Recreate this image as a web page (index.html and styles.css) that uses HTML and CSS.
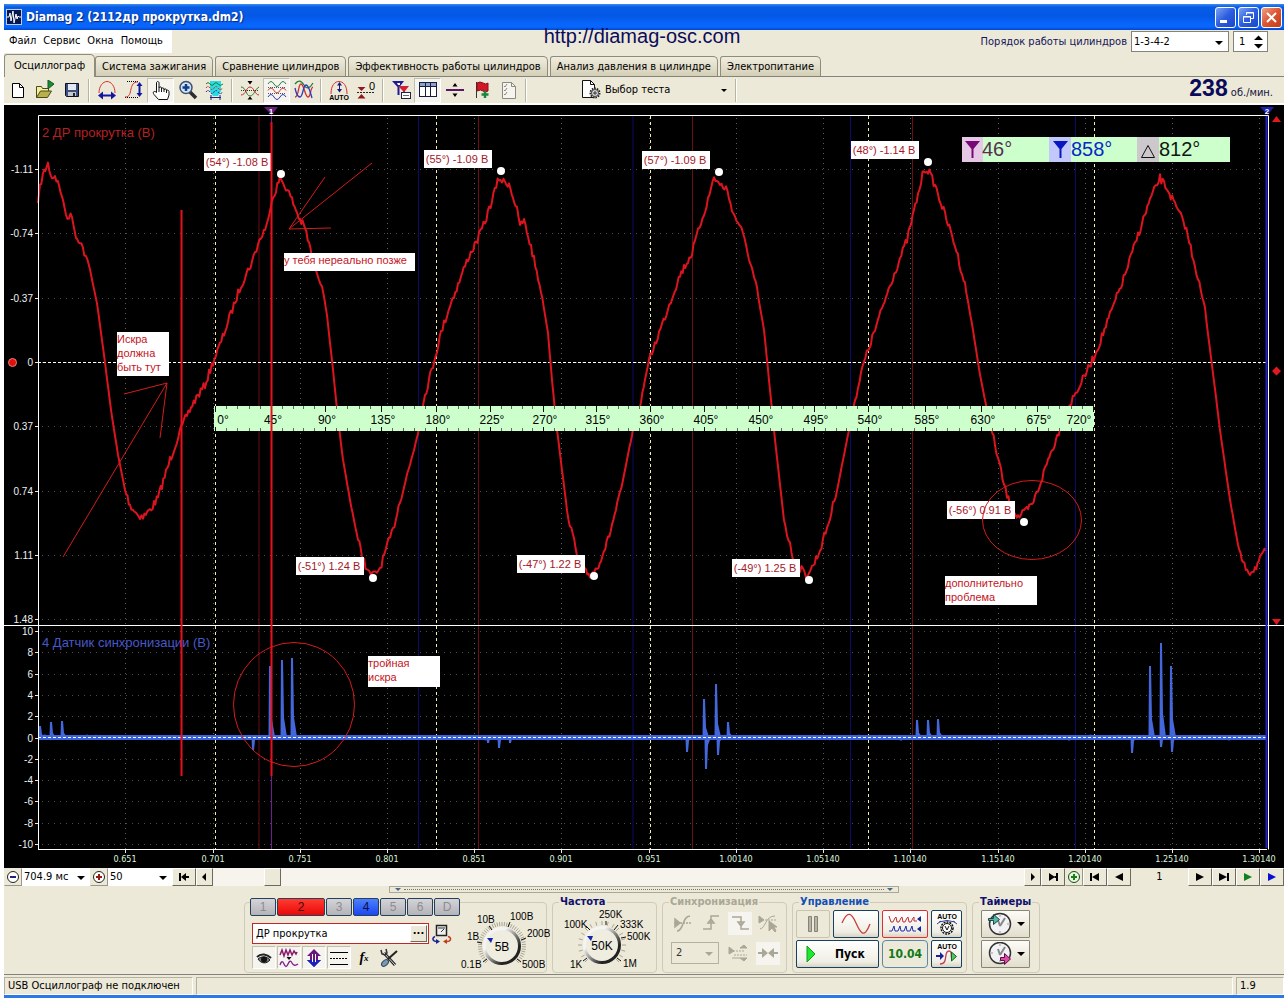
FILE: index.html
```html
<!DOCTYPE html>
<html lang="ru">
<head>
<meta charset="utf-8">
<title>Diamag 2 (2112др прокрутка.dm2)</title>
<link rel="stylesheet" href="styles.css">
</head>
<body>
<div class="window">
  <header class="titlebar">
    <svg class="app-icon" width="16" height="16" viewBox="0 0 16 16"><rect x=".5" y=".5" width="15" height="15" fill="#06184e" stroke="#b8ccf4"/><path d="M1 8h2l1-4 1 8 2-10 1 12 2-9 1 5 1-3 1 1h2" fill="none" stroke="#fff"/></svg>
    <h1 class="title">Diamag 2 (2112др прокрутка.dm2)</h1>
    <div class="caption-buttons">
      <button class="cap" aria-label="Свернуть"><svg width="19" height="19" viewBox="0 0 19 19"><path d="M4 13.500h7" stroke="#fff" stroke-width="3"/></svg></button>
      <button class="cap" aria-label="Восстановить"><svg width="19" height="19" viewBox="0 0 19 19" fill="none" stroke="#fff"><path d="M7.500 7V4.500h7v6H12M7 5h8M4.500 8.500h7v6h-7zM4 9h8"/></svg></button>
      <button class="cap close" aria-label="Закрыть"><svg width="19" height="19" viewBox="0 0 19 19"><path d="M5 5l9 9M14 5l-9 9" stroke="#fff" stroke-width="2"/></svg></button>
    </div>
    <a class="site" href="#">http://diamag-osc.com</a>
  </header>

  <div class="menurow">
    <nav class="menu"><button>Файл</button><button>Сервис</button><button>Окна</button><button>Помощь</button></nav>
    <div class="order">
      <label for="order">Порядок работы цилиндров</label>
      <span class="combo framed order-combo"><select id="order"><option>1-3-4-2</option></select></span>
      <span class="spin framed"><input id="cyl" value="1" aria-label="Цилиндр"><svg width="9" height="14" viewBox="0 0 9 14"><path d="M0 5l4.500-4.500L9 5zM0 9l4.500 4.500L9 9z"/></svg></span>
    </div>
  </div>

  <div class="tabs" role="tablist">
    <button class="tab active" role="tab">Осциллограф</button><button class="tab" role="tab">Система зажигания</button><button class="tab" role="tab">Сравнение цилиндров</button><button class="tab" role="tab">Эффективность работы цилиндров</button><button class="tab" role="tab">Анализ давления в цилиндре</button><button class="tab" role="tab">Электропитание</button>
  </div>

  <div class="toolbar">
    <button class="tool" aria-label="Новый"><svg width="20" height="20" viewBox="0 0 20 20"><path d="M4.500 3.500h7l4 4v10h-11z" fill="#fff" stroke="#000"/><path d="M11.500 3.500v4h4" fill="none" stroke="#000"/></svg></button>
    <button class="tool" aria-label="Открыть"><svg width="20" height="20" viewBox="0 0 20 20"><path d="M1.500 17.500v-11h5l1 2h6v3" fill="#f4f0a0" stroke="#4c4a18"/><path d="M1.500 17.500l4-6.500h11l-4 6.500z" fill="#b8b04c" stroke="#4c4a18"/><path d="M13 0v9l6-5z" fill="#1c8a38" stroke="#0b5a1e"/></svg></button>
    <button class="tool" aria-label="Сохранить"><svg width="20" height="20" viewBox="0 0 20 20"><path d="M3.500 3.500h13v13h-12l-1-1z" fill="#40507c" stroke="#0c1020"/><path d="M6 4h8v6H6z" fill="#e4e8f4"/><path d="M6 12h8v4H6z" fill="#c4c8d0"/><path d="M11 13h2v3h-2z" fill="#223"/></svg></button>
    <span class="sep"></span>
    <button class="tool" aria-label="Период"><svg width="20" height="20" viewBox="0 0 20 20" fill="none"><path d="M2 13C2 6 6 1.500 10 1.500S18 6 18 13" stroke="#d83030"/><path d="M3 15.500h14" stroke="#1018a0" stroke-width="2"/><path d="M1 15.500l5-4v8zM19 15.500l-5-4v8z" fill="#1018a0"/></svg></button>
    <button class="tool" aria-label="Амплитуда"><svg width="20" height="20" viewBox="0 0 20 20" fill="none"><path d="M3 1.500h12M1 17.500h14" stroke="#000" stroke-dasharray="1 1"/><path d="M1 17c5 0 5-4 6-8s2-7 7-7" stroke="#d83030"/><path d="M15.500 4v11" stroke="#1018a0" stroke-width="2"/><path d="M15.500 2l-3 4h6zM15.500 17l-3-4h6z" fill="#1018a0"/></svg></button>
    <button class="tool pressed" aria-label="Рука"><svg width="20" height="20" viewBox="0 0 20 20"><path d="M5.500 12.500V3c0-2 2.500-2 2.500 0v5c0-1.500 2.500-1.500 2.500 0v1c0-1.500 2.500-1.500 2.500 0v1c0-1.500 2.500-1.500 2.500 0v1c0-1.500 2.500-1 2.500.500V15l-1.500 4.500h-9L3 14.500c-2-3 .500-4 2.500-2z" fill="#fff" stroke="#111"/><path d="M8 8v4M10.500 9v3M13 10v2M15.500 11v2" stroke="#111"/></svg></button>
    <button class="tool" aria-label="Масштаб"><svg width="20" height="20" viewBox="0 0 20 20"><path d="M12 12l6 6" stroke="#2c2c34" stroke-width="3.500"/><circle cx="8" cy="7.500" r="6" fill="#cfe6fa" stroke="#405070" stroke-width="1.500"/><path d="M8 4v7M4.500 7.500h7" stroke="#103c88" stroke-width="2.500"/></svg></button>
    <button class="tool" aria-label="Фрагмент"><svg width="20" height="20" viewBox="0 0 20 20" fill="none"><path d="M5 1h11v10l-3 5H8l-3-5z" fill="#28dce0"/><path d="M1 4q2-3 4 0t4 0 4 0 5 0" stroke="#187840"/><path d="M1 8q2-3 4 0t4 0 4 0 5 0" stroke="#c03030" stroke-dasharray="2 1"/><path d="M1 12q2-3 4 0t4 0 4 0 5 0" stroke="#2828a0" stroke-dasharray="2 1"/><path d="M5 17.500h11M6 15v5M15 15v5" stroke="#182880"/></svg></button>
    <span class="sep"></span>
    <button class="tool" aria-label="Совместить"><svg width="20" height="20" viewBox="0 0 20 20" fill="none"><path d="M1 7c5 0 5 9 9 9s5-7 9-9" stroke="#2a7a30"/><path d="M1 15c5 0 5-8 9-8s5 8 9 8" stroke="#c03030"/><path d="M1 10.500h18" stroke="#333" stroke-dasharray="1 1"/><path d="M10 4.500L7.500 1h5zM10 16.500l-2.500 3h5z" fill="#000"/></svg></button>
    <button class="tool pressed" aria-label="Разнести"><svg width="20" height="20" viewBox="0 0 20 20" fill="none"><path d="M1 4q3-5 6 0t6 0 6 0" stroke="#20803c"/><path d="M1 10.500q3-5 6 0t6 0 6 0" stroke="#c83030"/><path d="M1 17q3-5 6 0t6 0 6 0" stroke="#3438b0"/><path d="M1 7.500h18M1 13.500h18" stroke="#555" stroke-dasharray="1 1"/></svg></button>
    <button class="tool" aria-label="Наложить"><svg width="20" height="20" viewBox="0 0 20 20" fill="none" stroke-width="1.300"><path d="M1 4c3-4 6-4 9 1s6 3 9-2" stroke="#20803c"/><path d="M1 17c4 0 3-13 6-13s4 13 7 13 2-9 5-10" stroke="#d03030"/><path d="M1 8c1 5 2 9 5 9s3-12 6-12 4 7 6 13" stroke="#3038c0"/></svg></button>
    <span class="sep"></span>
    <button class="tool" aria-label="Авто"><svg width="20" height="20" viewBox="0 0 20 20" fill="none"><path d="M2 14C2 5 6 1.500 10 1.500S18 5 18 14" stroke="#d83030"/><path d="M10.500 4v6" stroke="#181880"/><path d="M10.500 2L8 5.500h5zM10.500 12.500L8 9h5z" fill="#181880"/><text class="mini" x="10" y="20" text-anchor="middle">AUTO</text></svg></button>
    <button class="tool" aria-label="Ноль"><svg width="20" height="20" viewBox="0 0 20 20"><path d="M1.500 7h8L5.500 11zM1.500 18.500h8L5.500 14z" fill="#901818"/><path d="M1 12.500h18" stroke="#222" stroke-dasharray="2 1"/><text class="zero" x="13" y="10">0</text></svg></button>
    <span class="sep"></span>
    <button class="tool" aria-label="Маркеры"><svg width="20" height="20" viewBox="0 0 20 20"><path d="M1 1h12L8.500 7v8h-2V7z" fill="#1c1c98"/><path d="M7 6h11l-4 5v3h-2v-3z" fill="#d02038"/><path d="M6 3h3v2H7z" fill="#fff"/><rect x="10.500" y="12.500" width="9" height="6" fill="#fff" stroke="#224"/><path d="M12 15.500h6" stroke="#667"/></svg></button>
    <button class="tool pressed" aria-label="Таблица"><svg width="20" height="20" viewBox="0 0 20 20"><rect x="1.500" y="2.500" width="17" height="14" fill="#fff" stroke="#181c40"/><path d="M2 3h16v3H2z" fill="#8ca0c8"/><path d="M7.500 3v13M12.500 3v13M2 6.500h16" stroke="#181c40"/></svg></button>
    <button class="tool" aria-label="Линейка"><svg width="20" height="20" viewBox="0 0 20 20"><path d="M1 10h18" stroke="#5c1464" stroke-width="2"/><path d="M10 3L7.500 6.500h5zM10 17l-2.500-3.500h5z" fill="#000"/></svg></button>
    <button class="tool" aria-label="Добавить метку"><svg width="20" height="20" viewBox="0 0 20 20"><path d="M4.500 2v16" stroke="#333"/><path d="M5 3q3-2 6 0t5 0v8q-3 2-5 0t-6 0z" fill="#d01828" stroke="#881018"/><path d="M13 11v7M9.500 14.500h7" stroke="#18883c" stroke-width="2.500"/></svg></button>
    <button class="tool" aria-label="Список"><svg width="20" height="20" viewBox="0 0 20 20" fill="none" stroke="#8a8a84"><path d="M3.500 2.500h9l4 4v12h-13z" fill="#f6f4ec"/><path d="M12.500 2.500v4h4M5 6l1 1 2-3M5 10l1 1 2-3M5 14l1 1 2-3"/></svg></button>
    <span class="sep"></span>
    <button class="test"><svg width="20" height="20" viewBox="0 0 20 20"><path d="M1.500.500h8l4 4v13h-12z" fill="#fff" stroke="#111"/><path d="M9.500.500v4h4" fill="none" stroke="#111"/><circle cx="14" cy="13" r="4.500" fill="#ddd" stroke="#222" stroke-width="2" stroke-dasharray="1.500 1"/><circle cx="14" cy="13" r="3.500" fill="#ddd" stroke="#444"/><path d="M14 11v4M12 13h4" stroke="#333"/></svg><span>Выбор теста</span><i class="caret"></i></button>
    <span class="sep"></span>
    <p class="rpm"><b>238</b> об./мин.</p>
  </div>

  <svg class="scope" id="scope" viewBox="4 105 1280 763" role="img" aria-label="Осциллограмма">
    <rect x="4" y="105" width="1280" height="763"/>
    <g id="grid"></g>
    <g class="sync"><path d="M215.500 116v733M436.500 116v733M650.500 116v733M868.500 116v733M1094.500 116v733"/></g>
    <path class="tdc-red" d="M259 116v733M478.500 116v733M692.500 116v733M912.500 116v733"/>
    <path class="tdc-blue" d="M418.500 116v733M633 116v733M850.500 116v733M1075.500 116v733"/>
    <path class="cursor1" d="M271.500 107v742"/>
    <path class="zero-line" d="M38 362.500h1229"/>
    <g id="traces"></g>
    <path class="zero-line" d="M38 737.500h1229"/>
    <path class="frame" d="M38.500 849V115.500H1268.500V849.500M38 849.500h1229M4 625.500h1280"/>
    <path class="cursor2" d="M1266.500 116v732"/>
    <path d="M264 107h14l-6.500 8z" fill="#68207c"/><path d="M1260 107h14l-6.500 8z" fill="#1820b0"/>
    <text class="flag" x="271" y="114">1</text><text class="flag" x="1267" y="114">2</text>
    <path class="level" d="M1272 122l4.500-6 4.500 6zM1272 371l4.500-4.500 4.500 4.500-4.500 4.500zM1272 619h9l-4.500 6z"/>
    <circle cx="12.500" cy="362.500" r="4" fill="#e01010" stroke="#f08070"/>
    <text class="chan red" x="42" y="137">2 ДР прокрутка (В)</text>
    <text class="chan blue" x="42" y="647">4 Датчик синхронизации (В)</text>
    <g id="ruler"></g>
    <g id="peaks"></g>
    <g>
      <rect x="962" y="137" width="268" height="25" fill="#ccffcc"/><rect x="962" y="137" width="21" height="25" fill="#e6c8e6"/><rect x="1049" y="137" width="22" height="25" fill="#c2c8fa"/><rect x="1137" y="137" width="22" height="25" fill="#ccc8cc"/>
      <path d="M965 141h15l-6.500 8v9h-2v-9z" fill="#780878"/><path d="M1053 141h15l-6.500 8v9h-2v-9z" fill="#0818c0"/><path d="M1141.500 157.500l6.500-12 6.500 12z" fill="none" stroke="#111"/>
      <text class="deg" x="982" y="156" fill="#58304e">46°</text><text class="deg" x="1071" y="156" fill="#0828c8">858°</text><text class="deg" x="1159" y="156" fill="#101810">812°</text>
    </g>
    <g fill="#fff"><rect x="284" y="253" width="131" height="18"/><rect x="117" y="332" width="52" height="44"/><rect x="945" y="576" width="92" height="29"/><rect x="368" y="656" width="72" height="31"/></g>
    <g class="note"><text x="284" y="264">у тебя нереально позже</text><text x="117" y="343">Искра</text><text x="117" y="357">должна</text><text x="117" y="371">быть тут</text><text x="945" y="587">дополнительно</text><text x="945" y="601">проблема</text><text x="368" y="667">тройная</text><text x="368" y="681">искра</text></g>
    <g class="pen"><path d="M372 163L289 229l36-52M289 229l42-1M63 557L167 383l-43 11M167 383l-7 55"/><ellipse cx="294" cy="704.500" rx="60.500" ry="62"/><ellipse cx="1032" cy="520" rx="49.500" ry="39.500"/></g>
    <path class="hand-line" d="M181.500 210v566M271.500 122v654"/>
  </svg>

  <div class="navrow">
    <button class="step" aria-label="Уменьшить"><svg width="14" height="14" viewBox="0 0 14 14"><circle cx="7" cy="7" r="5.500" fill="#fff" stroke="#222"/><path d="M4 7h6" stroke="#1c2080" stroke-width="2"/></svg></button>
    <span class="combo time-combo"><select aria-label="Развёртка"><option>704.9 мс</option></select></span>
    <button class="step" aria-label="Увеличить"><svg width="14" height="14" viewBox="0 0 14 14"><circle cx="7" cy="7" r="5.500" fill="#fff" stroke="#222"/><path d="M4 7h6M7 4v6" stroke="#901818" stroke-width="2"/></svg></button>
    <span class="combo zoom-combo"><select aria-label="Шаг"><option>50</option></select></span>
    <button class="nav wide" aria-label="В начало"><svg width="12" height="8" viewBox="0 0 12 8"><path d="M1 0h2v8H1zM3 4l5-4v8zM8 3h3v2H8z"/></svg></button>
    <button class="nav narrow" aria-label="Влево"><svg width="5" height="8" viewBox="0 0 5 8"><path d="M0 4l4-4v8z"/></svg></button>
    <div class="track"><button class="thumb" aria-label="Прокрутка"></button></div>
    <button class="nav narrow" aria-label="Вправо"><svg width="5" height="8" viewBox="0 0 5 8"><path d="M5 4L1 0v8z"/></svg></button>
    <button class="nav wide" aria-label="В конец"><svg width="12" height="8" viewBox="0 0 12 8"><path d="M11 0H9v8h2zM8 4L2 0v8zM7 3h2v2H7z"/></svg></button>
    <button class="step" aria-label="Добавить кадр"><svg width="14" height="14" viewBox="0 0 14 14"><circle cx="7" cy="7" r="5.500" fill="#e8f8e0" stroke="#184818"/><path d="M4 7h6M7 4v6" stroke="#188018" stroke-width="2"/></svg></button>
    <button class="nav wide" aria-label="Первый кадр"><svg width="12" height="8" viewBox="0 0 12 8"><path d="M1 0h2v8H1zM3 4l7-4v8z"/></svg></button>
    <button class="nav wide" aria-label="Предыдущий кадр"><svg width="8" height="8" viewBox="0 0 8 8"><path d="M0 4l8-4v8z"/></svg></button>
    <output class="frame-no">1</output>
    <button class="nav wide" aria-label="Следующий кадр"><svg width="8" height="8" viewBox="0 0 8 8"><path d="M8 4L0 0v8z"/></svg></button>
    <button class="nav wide" aria-label="Последний кадр"><svg width="12" height="8" viewBox="0 0 12 8"><path d="M11 0H9v8h2zM9 4L1 0v8z"/></svg></button>
    <button class="nav wide" aria-label="Воспроизвести"><svg width="8" height="8" viewBox="0 0 8 8"><path d="M8 4L0 0v8z" fill="#108020"/></svg></button>
    <button class="nav wide" aria-label="Воспроизвести все"><svg width="8" height="8" viewBox="0 0 8 8"><path d="M8 4L0 0v8z" fill="#0810d8"/></svg></button>
  </div>

  <div class="splitter"><i></i><span></span><i></i></div>

  <section class="dock">
    <fieldset class="group channel" aria-label="Канал">
      <div class="chan-left">
        <div class="chan-row"><button class="ch">1</button><button class="ch ch-red">2</button><button class="ch">3</button><button class="ch ch-blue">4</button><button class="ch">5</button><button class="ch">6</button><button class="ch">D</button></div>
        <div class="name-row">
          <span class="name-box"><input value="ДР прокрутка" aria-label="Название канала"><button class="dots" aria-label="Выбрать">···</button></span>
          <button class="plain" aria-label="Заменить датчик"><svg width="20" height="20" viewBox="0 0 20 20" fill="none"><rect x="4.500" y="1.500" width="10" height="10" fill="#eee" stroke="#222" stroke-width="1.500"/><path d="M6 4h7M9 8l3-3" stroke="#333"/><path d="M5 17.500c-5 0-5-4-2-5" stroke="#1c2490" stroke-width="1.500"/><path d="M4 15v5l4-2.500z" fill="#1c2490"/><path d="M16 12.500c4 1 3 5-1 5" stroke="#c04020" stroke-width="1.500"/><path d="M15 15v5l-4-2.500z" fill="#c04020"/></svg></button>
        </div>
        <div class="icon-row">
          <button class="mini-tool pressed" aria-label="Видимость"><svg width="20" height="20" viewBox="0 0 20 20"><path d="M3 9c4-4 10-3 14 1" fill="none" stroke="#222" stroke-width="2"/><path d="M4 11c3-3 9-3 12 1-3 4-9 4-12-1z" fill="#777" stroke="#222"/><circle cx="10" cy="11.500" r="3" fill="#111"/></svg></button>
          <button class="mini-tool pressed" aria-label="Фильтр"><svg width="20" height="20" viewBox="0 0 20 20" fill="none"><path d="M1 7l2-5 2 6 2-6 2 5 2-5 2 5 2-4 2 3 1-2" stroke="#8c1870" stroke-width="1.500"/><path d="M1 17q2-6 4-1t4 0 4-1 6 1" stroke="#7c1c90" stroke-width="1.300"/><path d="M7.500 9h5L10 12z" fill="#111"/></svg></button>
          <button class="mini-tool pressed" aria-label="Инверсия"><svg width="20" height="20" viewBox="0 0 20 20"><path d="M10 1L3 8h3v4H3l7 7 7-7h-3V8h3z" fill="#68187c"/><path d="M3 12l7 7 7-7z" fill="#1820c0"/><path d="M8.500 6v8M11.500 6v8" stroke="#fff"/></svg></button>
          <button class="mini-tool pressed" aria-label="Линии"><svg width="20" height="20" viewBox="0 0 20 20"><path d="M1 4.500h18M1 16.500h18" stroke="#000"/><path d="M1 10.500h18" stroke="#000" stroke-dasharray="2 1"/></svg></button>
          <button class="mini-tool fx" aria-label="Функция">f<sub>x</sub></button>
          <button class="mini-tool" aria-label="Настройка"><svg width="20" height="20" viewBox="0 0 20 20"><path d="M5 5l11 12" stroke="#222" stroke-width="3"/><path d="M5 5l11 12" stroke="#ddd"/><path d="M2 2l1 4 3 1 2-2-1-4" fill="none" stroke="#333" stroke-width="1.500"/><path d="M18 3L9 11" stroke="#222" stroke-width="2"/><ellipse cx="6" cy="15" rx="4" ry="2.500" transform="rotate(-42 6 15)" fill="#7898b8" stroke="#345"/></svg></button>
        </div>
      </div>
      <svg class="knob" width="90" height="64" viewBox="456 908 90 64"><g id="knobV"></g></svg>
    </fieldset>
    <fieldset class="group freq"><legend>Частота</legend><svg class="knob" width="94" height="64" viewBox="561 908 94 64"><g id="knobF"></g></svg></fieldset>
    <fieldset class="group trig" disabled><legend>Синхронизация</legend>
      <div class="trig-row">
        <button class="ticon" aria-label="Уровень"><svg width="20" height="20" viewBox="0 0 20 20" fill="none" stroke="#aaa796" stroke-width="1.500"><path d="M4 18c7 0 5-15 13-15"/><path d="M1 10h18" stroke-dasharray="2 1"/><path d="M2 6v8l5-4z" fill="#aaa796"/></svg></button>
        <button class="ticon" aria-label="Фронт"><svg width="20" height="20" viewBox="0 0 20 20" fill="none" stroke="#aaa796" stroke-width="1.500"><path d="M2 16h8V3h8M7 10l3-4 3 4z"/></svg></button>
        <button class="ticon pressed" aria-label="Спад"><svg width="20" height="20" viewBox="0 0 20 20" fill="none" stroke="#aaa796" stroke-width="1.500"><path d="M2 4h9v12h8M8 9l3 4 3-4z"/></svg></button>
        <button class="ticon" aria-label="Выбор уровня"><svg width="20" height="20" viewBox="0 0 20 20" fill="none" stroke="#aaa796"><path d="M2 16c6-1 5-13 15-13"/><path d="M1 7h18" stroke-dasharray="2 1"/><path d="M1 3v7l5-3zM11 8v10l3-3 3 4 1-1-2-4h3z" fill="#aaa796"/></svg></button>
      </div>
      <div class="trig-row">
        <span class="combo trig-combo"><select aria-label="Канал синхронизации" disabled><option>2</option></select></span>
        <button class="ticon" aria-label="Порог"><svg width="20" height="20" viewBox="0 0 20 20" fill="none" stroke="#aaa796"><path d="M2 8h14M6 12h13" stroke-dasharray="2 1"/><path d="M1 4v7l5-3zM12 5h7l-3-3zM12 15h7l-3 3z" fill="#aaa796"/><path d="M4 15h8"/></svg></button>
        <button class="ticon pressed" aria-label="Центр"><svg width="20" height="20" viewBox="0 0 20 20"><path d="M0 9h4V5l6 5-6 5v-4H0zM20 9h-4V5l-6 5 6 5v-4h4z" fill="#aaa796"/></svg></button>
      </div>
    </fieldset>
    <fieldset class="group control"><legend>Управление</legend>
      <div class="control-grid">
        <button class="xp flat" aria-label="Пауза"><svg width="14" height="16" viewBox="0 0 14 16" fill="#b8b5a8" stroke="#858378"><path d="M2.500.500h3v15h-3zM8.500.500h3v15h-3z"/></svg></button>
        <button class="xp" aria-label="Генератор"><svg width="32" height="22" viewBox="0 0 32 22"><path d="M2 10C8-4 12 1 16 10s8 17 14 1" fill="none" stroke="#c84038" stroke-width="1.300"/></svg></button>
        <button class="xp redframe" aria-label="Запись"><svg width="34" height="20" viewBox="0 0 34 20" fill="none"><path d="M1 2l2 6h2l2-4 1-1 1 5h2l2-4 1-1 1 5h2l2-4 1-1 1 5h2l2-4 1-1v4h3" stroke="#c42c3c"/><path d="M1 17h3l2-5 1 5h3l2-5 1 5h3l2-5 1 5h3l2-5 1 5h3" stroke="#2430b0"/><path d="M33 2v6l-4-3zM33 12v6l-4-3z" fill="#1c2490"/></svg></button>
        <button class="xp" aria-label="Авто вольт"><svg width="26" height="24" viewBox="0 0 26 24" fill="none" stroke="#111"><text class="mini" x="13" y="7" text-anchor="middle">AUTO</text><circle cx="13" cy="16" r="6" fill="#fff" stroke-width="1.500" stroke-dasharray="2 1"/><circle cx="13" cy="16" r="4.500" fill="#fff"/><path d="M11 14l2 4 2-4"/><path d="M5 10q8-3 16 0M3 12l4-3M23 12l-4-3" stroke="#28409c"/></svg></button>
        <button class="xp start"><svg width="14" height="18" viewBox="0 0 14 18"><path d="M3 1v16l8-8z" fill="#20e830" stroke="#0ca018"/></svg>Пуск</button>
        <output class="xp clock">10.04</output>
        <button class="xp" aria-label="Авто пуск"><svg width="26" height="24" viewBox="0 0 26 24" fill="none"><text class="mini" x="13" y="7" text-anchor="middle">AUTO</text><path d="M6 22c9 0 3-13 9-13 4 0 1 7 3 8" stroke="#c04050" stroke-width="1.300"/><path d="M2 14h5" stroke="#1820a0" stroke-width="2"/><path d="M6 10v8l4-4z" fill="#1820a0"/><path d="M17.500 10v9l5-4.500z" fill="#50c860" stroke="#186028"/></svg></button>
      </div>
    </fieldset>
    <fieldset class="group timers"><legend>Таймеры</legend>
      <div class="timer-col">
        <button class="timer" aria-label="Таймер пуска"><svg width="26" height="24" viewBox="0 0 26 24"><circle cx="14" cy="12" r="10.500" fill="#f2f2f4" stroke="#333" stroke-width="1.500"/><path d="M14 14l-2-6M14 14l5-8" stroke="#888" stroke-width="2"/><path d="M14 3v2M14 19v2M21 12h2" stroke="#999"/><path d="M2.500 6.500h5v-4l6 5-6 5v-4h-5z" fill="#58b8a8" stroke="#184848"/></svg><i class="caret"></i></button>
        <button class="timer" aria-label="Таймер остановки"><svg width="26" height="24" viewBox="0 0 26 24"><circle cx="14" cy="11" r="10.500" fill="#f2f2f4" stroke="#333" stroke-width="1.500"/><path d="M14 13l-2-6M14 13l5-8" stroke="#888" stroke-width="2"/><path d="M14 2v2M14 18v2M5 11h2" stroke="#999"/><path d="M14.500 15.500h4v-4l6 5.500-6 5.500v-4h-4z" fill="#e048a8" stroke="#581040"/></svg><i class="caret"></i></button>
      </div>
    </fieldset>
  </section>

  <footer class="status"><span class="cell usb">USB Осциллограф не подключен</span><span class="cell grow"></span><span class="cell ver">1.9</span></footer>
</div>
<div class="desktop"></div>
<script src="script.js"></script>
</body>
</html>
```
FILE: styles.css
```css
* { box-sizing: border-box; }
body {
  margin: 0;
  min-height: 100vh;
  padding: 4px 4px 0 4px;
  display: flex;
  flex-direction: column;
  background: #fff;
  font: 11px/14px "DejaVu Sans Condensed", "DejaVu Sans", sans-serif;
  color: #000;
}
button, input, select { font: inherit; color: inherit; margin: 0; border: 0; background: none; padding: 0; border-radius: 0; }
svg { display: block; flex: none; }
.window { background: #ece9d8; display: flex; flex-direction: column; }
.desktop { flex: 1; min-height: 4px; background: #2c78e4; }

.titlebar {
  position: relative;
  height: 26px;
  display: flex;
  align-items: center;
  gap: 4px;
  padding: 0 2px;
  background: linear-gradient(#3a8cf4 0, #0a5ce4 3px, #0458e6 12px, #0866fc 20px, #0866fc 23px, #0246c8 26px);
}
.title { margin: 0; flex: 1; font: bold 12px/16px "DejaVu Sans Condensed", sans-serif; color: #fff; text-shadow: 1px 1px 1px #0c2a80; }
.caption-buttons { display: flex; gap: 2px; }
.cap { width: 21px; height: 21px; border: 1px solid #fff; border-radius: 3px; background: linear-gradient(135deg, #7ca4f4, #2c5ce0 50%, #1c48c8); }
.cap.close { background: linear-gradient(135deg, #f0a088, #dc5430 50%, #c03c18); }
.site { position: absolute; left: 0; right: 4px; top: 20px; text-align: center; font: 20px/24px "Liberation Sans", sans-serif; color: #0c0c5c; text-decoration: none; }

.menurow { height: 25px; display: flex; justify-content: space-between; align-items: flex-start; }
.menu { display: flex; gap: 7px; background: #fff; padding: 4px 9px 5px 5px; }
.menu button { height: 14px; }
.order { display: flex; align-items: center; gap: 4px; padding: 1px 16px 0 0; color: #14145c; }
.framed { border: 1px solid #84827a; background: #fff; height: 21px; color: #000; }
.combo { position: relative; display: inline-flex; }
.combo select { appearance: none; width: 100%; height: 100%; padding: 0 12px 0 2px; }
.combo::after, .caret { content: ""; border: 4px solid transparent; border-top-color: #000; border-bottom: 0; }
.combo::after { position: absolute; right: 5px; top: 50%; margin-top: -1px; pointer-events: none; }
.order-combo { width: 98px; }
.spin { display: flex; align-items: center; width: 35px; padding-left: 5px; }
.spin input { width: 15px; }

.tabs { display: flex; align-items: flex-end; height: 22px; gap: 2px; border-bottom: 1px solid #84827a; }
.tab { height: 20px; padding: 0 6px; border: 1px solid #8f8c7c; border-bottom: 0; border-radius: 3px 5px 0 0; background: linear-gradient(#f0eddf, #d4cfb6); white-space: nowrap; }
.tab.active { height: 23px; padding: 0 9px; background: #ece9d8; margin: 0 -2px -1px 0; }

.toolbar { height: 28px; display: flex; align-items: center; border-bottom: 2px solid #fff; }
.tool { width: 27px; height: 25px; display: flex; align-items: center; justify-content: center; }
.pressed { background: #f6f4ee; border: 1px solid #fff; border-top-color: #c4c0b0; border-left-color: #c4c0b0; }
.sep { width: 8px; height: 23px; background: linear-gradient(90deg, transparent 3px, #b8b4a2 3px, #b8b4a2 4px, #fff 4px, #fff 5px, transparent 5px); flex: none; }
.test { width: 202px; height: 24px; padding: 0 5px 0 51px; display: flex; align-items: center; gap: 4px; }
.test span { flex: 1; text-align: left; }
.caret { flex: none; width: 0; height: 0; display: inline-block; }
.test .caret { border-width: 3px 3px 0 3px; }
.rpm { margin: 0 11px 0 auto; line-height: 24px; color: #14143c; }
.rpm b { font: bold 23px/24px "Liberation Sans", sans-serif; color: #0a0a5a; }
.mini { font: bold 7px "Liberation Sans", sans-serif; fill: #000; stroke: none; }
.zero { font: 11px "Liberation Sans", sans-serif; }

.scope { width: 100%; height: auto; }
.grid-line { stroke: #4a4e4a; stroke-dasharray: 1 5; fill: none; }
.grid-v { stroke: #5a5e5a; stroke-dasharray: 1 4; fill: none; }
.axis { stroke: #e8e8e8; fill: none; }
.ylab, .xlab { fill: #f0f0f0; font: 10px "Liberation Sans", sans-serif; text-anchor: end; }
.xlab { font: 9px "DejaVu Sans Condensed", sans-serif; text-anchor: middle; fill: #dcf4dc; }
.sync path { stroke: #f4f0a0; stroke-dasharray: 3 3; }
.tdc-red { stroke: #681014; }
.tdc-blue { stroke: #0a0a68; }
.cursor1 { stroke: #70208c; }
.cursor2 { stroke: #2020d0; stroke-width: 2; }
.zero-line { stroke: #fff; stroke-dasharray: 3 2; }
.frame { fill: none; stroke: #fff; }
.flag { font: bold 8px "Liberation Sans", sans-serif; fill: #fff; text-anchor: middle; }
.level { fill: #e01820; }
.chan { font: 13px "Liberation Sans", sans-serif; }
.chan.red { fill: #b42024; }
.chan.blue { fill: #4858c8; }
.trace-red { fill: none; stroke: #dc1420; stroke-width: 2; stroke-linejoin: round; }
.peak { font: 11px "Liberation Sans", sans-serif; fill: #a41828; text-anchor: middle; }
.deg { font: 20px "Liberation Sans", sans-serif; }
.rlab { font: 12px "Liberation Sans", sans-serif; text-anchor: middle; }
.note { font: 11px "Liberation Sans", sans-serif; fill: #c41424; }
.pen { fill: none; stroke: #d41c1c; }
.hand-line { stroke: #e8101c; stroke-width: 2; fill: none; }

.navrow { height: 18px; display: flex; align-items: stretch; }
.step { width: 18px; display: flex; align-items: center; justify-content: center; border: 1px solid #ece9d8; border-right-color: #9a9788; border-bottom-color: #9a9788; }
.navrow .combo { background: #fff; }
.time-combo { width: 68px; }
.zoom-combo { width: 64px; }
.nav { display: flex; align-items: center; justify-content: center; border: 1px solid #fff; border-right-color: #6c6a5e; border-bottom-color: #6c6a5e; }
.nav.wide { width: 24px; }
.nav.narrow { width: 17px; }
.track { flex: 1; display: flex; background: #f6f4ec; padding-left: 51px; }
.thumb { width: 17px; background: #ece9d8; border: 1px solid #fff; border-right-color: #6c6a5e; border-bottom-color: #6c6a5e; }
.frame-no { width: 57px; text-align: center; line-height: 18px; }

.splitter { align-self: center; width: 510px; max-width: 100%; height: 7px; display: flex; align-items: center; gap: 3px; padding: 0 5px; border: 1px solid #aaa796; }
.splitter i { border: 3px solid transparent; border-top-color: #48688c; border-bottom: 0; }
.splitter span { flex: 1; border-top: 1px dotted #77756a; }

.dock { display: flex; justify-content: center; gap: 5px; padding: 2px 4px 1px 0; border-bottom: 1px solid #84827a; }
.group { margin: 0; min-width: 0; height: 78px; padding: 0; border: 1px solid #cfcbb8; border-radius: 4px; }
.group legend { margin-left: 6px; padding: 0 1px; font: bold 11px/14px "DejaVu Sans Condensed", sans-serif; color: #10106c; }
.channel { display: flex; justify-content: space-between; width: 303px; height: 71px; margin-top: 7px; padding: 0 2px 0 5px; }
.chan-left { display: flex; flex-direction: column; margin-top: -5px; }
.chan-row { display: flex; gap: 1px; }
.ch { width: 26px; height: 18px; border: 1px solid #24405c; border-radius: 2px; background: linear-gradient(#d4d4d8, #b4b4b8); color: #8c8c90; font: 12px/14px "Liberation Sans", sans-serif; }
.ch-red { width: 48px; background: linear-gradient(#ff3c30, #e80808); color: #3c0808; }
.ch-blue { background: linear-gradient(#4c80fc, #1c48f0); color: #08104c; }
.name-row { display: flex; align-items: center; gap: 3px; margin: 7px 0 0 2px; }
.name-box { display: flex; width: 177px; height: 21px; padding: 1px; border: 1px solid #c02828; background: #fff; }
.name-box input { flex: 1; min-width: 0; padding-left: 2px; }
.dots { width: 17px; background: #ece9d8; border: 1px solid #fff; border-right-color: #6c6a5e; border-bottom-color: #6c6a5e; font-weight: bold; line-height: 10px; }
.icon-row { display: flex; gap: 1px; margin: 2px 0 0 2px; }
.mini-tool { width: 24px; height: 23px; display: flex; align-items: center; justify-content: center; }
.fx { font: italic bold 14px/16px "Liberation Serif", serif; }
.fx sub { font-size: 9px; }
.knob text { font: 10px "Liberation Sans", sans-serif; }
.knob .val { font-size: 12px; text-anchor: middle; }
.knob { margin-top: 5px; }
.freq { width: 105px; }
.freq .knob { margin: -1px 0 0 8px; }
.group.trig { width: 125px; }
.group.trig legend { color: #aaa796; }
.trig-row { display: flex; align-items: center; justify-content: space-between; height: 28px; padding: 0 6px 0 8px; }
.trig-row + .trig-row { margin-top: 2px; }
.ticon { width: 24px; height: 23px; display: flex; align-items: center; justify-content: center; }
.ticon.pressed { border: 0; }
.trig-combo { width: 48px; height: 22px; border: 1px solid #b4b1a0; }
.trig-combo select { color: #333; opacity: 1; padding-left: 4px; }
.trig-combo::after { border-top-color: #aaa796; }
.group.control { width: 175px; }
.group.control legend { color: #1450b4; }
.control-grid { display: grid; grid-template-columns: 34px 46px 46px 31px; gap: 2px 3px; padding: 1px 0 0 3px; }
.xp { height: 28px; display: flex; align-items: center; justify-content: center; border: 1px solid #184064; border-radius: 2px; background: linear-gradient(#fff, #f0eee4 80%, #d8d4c4); }
.flat { border-color: #c8c4b0; background: #ece9d8; }
.redframe { border-color: #d83038; }
.start { grid-column: span 2; gap: 17px; justify-content: flex-start; padding-left: 7px; font-weight: bold; font-size: 12px; }
.clock { border: 1px solid #5c88a8; border-radius: 4px; background: #ece9d8; color: #107818; font-weight: bold; font-size: 12px; }
.timers { width: 68px; }
.timer-col { display: flex; flex-direction: column; gap: 2px; width: 49px; margin: 1px 0 0 8px; }
.timer { height: 28px; display: flex; align-items: center; justify-content: center; gap: 5px; border: 1px solid #88867a; border-radius: 1px; background: linear-gradient(#fcfbf6, #e2decc); }

.status { display: flex; height: 20px; gap: 3px; padding-top: 2px; }
.cell { border: 1px solid #fff; border-top-color: #b4b1a0; border-left-color: #b4b1a0; padding: 1px 3px; white-space: nowrap; }
.usb { width: 189px; }
.grow { flex: 1; }
.ver { width: 48px; }
```
FILE: script.js
```js
const NS = 'http://www.w3.org/2000/svg';
function add(parent, tag, attrs, text) {
  const el = document.createElementNS(NS, tag);
  for (const k in attrs) el.setAttribute(k, attrs[k]);
  if (text !== undefined) el.textContent = text;
  parent.appendChild(el);
  return el;
}
const byId = id => document.getElementById(id);

// Grid and axis labels
const grid = byId('grid');
const xs = [125, 213, 300, 387, 474, 561, 649, 736, 823, 910, 998, 1085, 1172, 1259];
const xText = ['0.651', '0.701', '0.751', '0.801', '0.851', '0.901', '0.951', '1.00140', '1.05140', '1.10140', '1.15140', '1.20140', '1.25140', '1.30140'];
xs.forEach((x, i) => {
  add(grid, 'path', { class: 'grid-v', d: `M${x + .5} 118v731` });
  add(grid, 'path', { class: 'axis', d: `M${x + .5} 849v4` });
  add(grid, 'text', { class: 'xlab', x, y: 862 }, xText[i]);
});
const row = (y, label) => {
  add(grid, 'path', { class: 'grid-line', d: `M42 ${y + .5}h1225` });
  add(grid, 'path', { class: 'axis', d: `M35 ${y + .5}h4` });
  add(grid, 'text', { class: 'ylab', x: 33, y: y + 4 }, label);
};
['-1.11', '-0.74', '-0.37', '0', '0.37', '0.74', '1.11', '1.48'].forEach((t, i) => row(Math.round(169 + i * 64.3), t));
for (let i = 0; i <= 10; i++) row(Math.round(631 + i * 21.3), String(10 - 2 * i));

// Crankshaft sensor trace
const pts = [38,203,40,185,44,172,48,164,52,178,55,175,62,195,66,215,72,217,76,238,80,240,90,270,97,303,104,355,111,410,118,455,125,490,130,505,137,514,143,517,150,510,158,498,162,485,170,460,178,437,187,415,195,400,205,385,213,362,220,345,228,322,241,285,252,262,258,244,268,222,272,200,280,178,286,187,292,200,300,220,305,228,313,260,322,285,327,315,333,370,337,410,343,460,350,500,358,540,363,558,368,573,374,575,380,568,386,550,393,530,400,500,410,465,418,432,425,395,433,365,441,333,450,305,458,285,468,258,476,243,485,222,492,200,499,178,505,183,509,183,517,210,520,225,524,221,531,247,541,290,548,333,552,380,557,430,562,470,567,510,577,555,582,570,590,575,597,568,608,540,620,495,632,435,641,400,649,360,662,325,668,308,680,275,692,253,701,222,708,200,714,177,720,185,726,188,735,218,740,225,749,257,757,290,764,330,769,380,775,440,784,520,793,558,800,568,806,575,812,568,820,550,830,518,840,475,849,430,855,400,864,362,875,330,890,285,907,240,918,195,924,169,928,170,935,185,945,215,955,245,965,285,973,330,980,375,987,410,995,445,1004,485,1010,505,1018,517,1024,513,1032,505,1038,490,1048,460,1056,440,1064,415,1080,385,1095,355,1110,315,1125,275,1138,235,1150,200,1160,178,1168,190,1175,205,1185,225,1195,265,1205,310,1212,365,1220,430,1230,500,1238,545,1243,565,1250,572,1255,568,1260,560,1266,550];
let seed = 7;
const rnd = () => (seed = (seed * 16807) % 2147483647) / 2147483647 - .5;
let d = `M${pts[0]} ${pts[1]}`;
for (let i = 2; i < pts.length; i += 2) {
  const x0 = pts[i - 2], y0 = pts[i - 1], x1 = pts[i], y1 = pts[i + 1];
  const slope = Math.abs(y1 - y0) / (x1 - x0);
  const amp = slope > 4.5 ? 1 : 8;
  const n = Math.max(1, Math.round((x1 - x0) / 1.4));
  for (let k = 1; k <= n; k++) {
    const t = k / n;
    d += `L${(x0 + (x1 - x0) * t).toFixed(1)} ${(y0 + (y1 - y0) * t + rnd() * amp).toFixed(1)}`;
  }
}
const traces = byId('traces');
add(traces, 'path', { class: 'trace-red', d });

// Sync sensor trace: baseline band plus [x, tip y] pulses
add(traces, 'path', { d: 'M38 737.5H1267', stroke: '#3c64dc', 'stroke-width': 5 });
let rip = 'M38 737';
for (let x = 40; x < 1267; x += 2) rip += `L${x} ${(737.5 + rnd() * 5).toFixed(1)}`;
add(traces, 'path', { d: rip, stroke: '#3c64dc', fill: 'none' });
[[40,726],[51,722],[62,721],[253,750],[270,666],[282,660],[292,658],[488,743],[499,748],[510,743],[687,752],[704,699],[706,769],[716,684],[718,755],[728,722],[917,720],[928,720],[938,719],[1132,753],[1150,666],[1161,643],[1161,747],[1171,666],[1172,752]]
  .forEach(([x, y]) => add(traces, 'path', { fill: '#4468dc', d: `M${x - 1.5} 737L${x - 1} ${y}h2L${x + 2} ${737 + (y - 737) * .25}L${x + 5} 737z` }));

// Degree ruler
const ruler = byId('ruler');
add(ruler, 'rect', { x: 214, y: 406, width: 880, height: 25, fill: '#ccffcc' });
const degX = [215, 271, 325, 381, 436, 490, 543, 596, 650, 704, 759, 814, 868, 925, 981, 1037, 1093];
degX.forEach((x, i) => {
  add(ruler, 'path', { stroke: '#111', d: `M${x + .5} 406v6M${x + .5} 431v-4` });
  if (i < 16) for (let k = 1; k < 5; k++) {
    const m = Math.round(x + (degX[i + 1] - x) * k / 5) + .5;
    add(ruler, 'path', { stroke: '#567056', d: `M${m} 406v3M${m} 431v-3` });
  }
  add(ruler, 'text', { class: 'rlab', x: i === 0 ? 223 : i === 16 ? 1079 : x + 2, y: 424 }, `${i * 45}°`);
});

// Peak labels: box x, box y, text, dot x, dot y
[[204,153,'(54°) -1.08 В',281,174],[424,150,'(55°) -1.09 В',501,171],[642,151,'(57°) -1.09 В',719,172],[851,141,'(48°) -1.14 В',928,162],
 [296,557,'(-51°) 1.24 В',373,578],[517,555,'(-47°) 1.22 В',594,576],[732,559,'(-49°) 1.25 В',809,580],[947,501,'(-56°) 0.91 В',1024,522]]
  .forEach(([x, y, t, cx, cy]) => {
    add(byId('peaks'), 'rect', { x, y, width: 68, height: 18, fill: '#fff' });
    add(byId('peaks'), 'text', { class: 'peak', x: x + 33, y: y + 13 }, t);
    add(byId('peaks'), 'circle', { cx, cy, r: 4, fill: '#fff' });
  });

// Rotary knobs
function knob(id, cx, cy, value, labels, pointer, ticks) {
  const g = byId(id);
  const grad = add(g, 'linearGradient', { id: id + 'g', x1: 0, y1: 0, x2: 1, y2: 1 });
  add(grad, 'stop', { offset: .3, 'stop-color': '#f4f4f4' });
  add(grad, 'stop', { offset: .75, 'stop-color': '#222' });
  for (let i = 0; i <= ticks; i++) {
    const a = (135 + 270 * i / ticks) * Math.PI / 180;
    add(g, 'path', { stroke: '#a8a494', d: `M${cx + 20 * Math.cos(a)} ${cy + 20 * Math.sin(a)}L${cx + 24 * Math.cos(a)} ${cy + 24 * Math.sin(a)}` });
  }
  add(g, 'circle', { cx, cy, r: 17.5, fill: '#efece0', stroke: `url(#${id}g)`, 'stroke-width': 3 });
  add(g, 'path', { fill: '#1824b0', d: `M${pointer[0] - 3} ${pointer[1] - 2}h6l-2 5z` });
  add(g, 'text', { class: 'val', x: cx, y: cy + 5 }, value);
  labels.forEach(([t, x, y, x1, y1, x2, y2]) => {
    add(g, 'text', { x, y }, t);
    add(g, 'path', { stroke: '#111', d: `M${x1} ${y1}L${x2} ${y2}` });
  });
}
knob('knobV', 498, 946, '5В', [['0.1В',457,968,479,962,483,959],['1В',463,940,473,942,478,943],['10В',473,923,485,926,488,930],['100В',506,920,506,922,504,927],['200В',523,937,522,938,517,940],['500В',518,968,517,962,513,959]], [486,940], 44);
knob('knobF', 602, 945, '50K', [['1K',570,968,583,961,587,958],['100K',564,928,586,926,590,930],['250K',599,918,606,921,606,925],['333K',620,928,618,925,614,930],['500K',627,940,626,937,621,938],['1M',623,967,621,961,617,958]], [590,938], 18);
```
